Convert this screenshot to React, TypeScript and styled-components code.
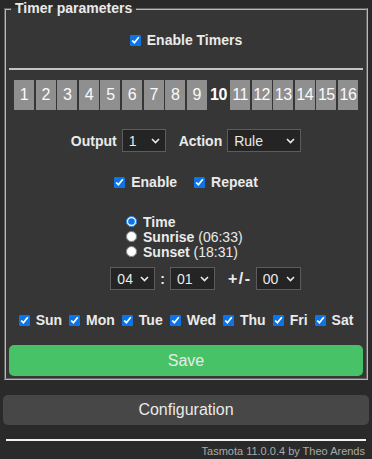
import React from "react";
import styled, { createGlobalStyle } from "styled-components";

const GlobalStyle = createGlobalStyle`
  body {
    margin: 0;
    background: #2a2a2a;
    color: #eaeaea;
    font-family: "Liberation Sans", Arial, sans-serif;
  }
`;

const Page = styled.div`
  padding: 0 3px;
  width: 366px;
`;

const Fieldset = styled.fieldset`
  margin: 0 1px;
  padding: 0 3px 2px;
  border: 2px groove #b8b8b8;
  background: #363636;
  min-width: 0;
`;

const Legend = styled.legend`
  font-weight: bold;
  font-size: 14px;
  line-height: 17px;
  padding: 0 4px;
  margin-left: 2px;
`;

const Row = styled.div<{ $top: number; $height?: number; $gap?: number; $shift?: number }>`
  display: flex;
  justify-content: center;
  align-items: center;
  margin-top: ${(p) => p.$top}px;
  height: ${(p) => p.$height ?? 18}px;
  gap: ${(p) => p.$gap ?? 0}px;
  padding-left: ${(p) => p.$shift ?? 0}px;
`;

const Check = styled.label<{ $gap?: number }>`
  display: inline-flex;
  align-items: center;
  gap: 6px;
  font-weight: bold;
  font-size: 14px;
  margin-right: ${(p) => p.$gap ?? 0}px;

  input {
    width: 11px;
    height: 11px;
    margin: 0;
    accent-color: #0a74e8;
  }
`;

const Rule = styled.hr`
  margin: 19px 0 0;
  border: none;
  height: 2px;
  background: #c4c4c4;
`;

const Tab = styled.div<{ $active?: boolean }>`
  width: 20px;
  height: 30px;
  display: flex;
  align-items: center;
  justify-content: center;
  font-size: 16px;
  color: ${(p) => (p.$active ? "#ffffff" : "#fafafa")};
  font-weight: ${(p) => (p.$active ? "bold" : "normal")};
  background: ${(p) => (p.$active ? "transparent" : "#8f8f8f")};
  letter-spacing: -0.5px;
`;

const Label = styled.span<{ $size?: number }>`
  font-weight: bold;
  font-size: ${(p) => p.$size ?? 14}px;
`;

const SelectWrap = styled.span<{ $w: number }>`
  position: relative;
  display: inline-flex;
  width: ${(p) => p.$w}px;
  height: 23px;

  svg {
    position: absolute;
    right: 6px;
    top: 9px;
    pointer-events: none;
  }
`;

const Select = styled.select`
  appearance: none;
  width: 100%;
  height: 100%;
  box-sizing: border-box;
  background: #242424;
  color: #eaeaea;
  border: 1px solid #5c5c5c;
  border-radius: 0;
  padding: 0 0 0 6px;
  font-family: "Liberation Sans", Arial, sans-serif;
  font-size: 14px;
  outline: none;
`;

const Radios = styled.div`
  margin: 23px auto 0;
  width: 118px;
  padding-right: 2px;
  display: flex;
  flex-direction: column;
`;

const RadioRow = styled.label`
  display: flex;
  align-items: center;
  gap: 6px;
  height: 15px;
  font-size: 14px;

  input {
    width: 11px;
    height: 11px;
    margin: 0;
    accent-color: #0a74e8;
  }

  b {
    font-weight: bold;
  }
`;

const Colon = styled.span`
  font-weight: bold;
  font-size: 14px;
  margin: 0 5px;
`;

const PlusMinus = styled.span`
  font-weight: bold;
  font-size: 16px;
  letter-spacing: 1.5px;
  margin: 0 4px 0 13px;
`;

const Button = styled.button<{ $save?: boolean }>`
  display: block;
  width: 100%;
  border: none;
  border-radius: 5px;
  font-family: "Liberation Sans", Arial, sans-serif;
  font-size: 16px;
  color: #eaeaea;
  background: ${(p) => (p.$save ? "#47c266" : "#474747")};
  height: ${(p) => (p.$save ? 31 : 30)}px;
  margin-top: ${(p) => (p.$save ? 16 : 15)}px;
  padding: 0;
`;

const FooterRule = styled.hr`
  margin: 14px 3px 0;
  border: none;
  height: 2px;
  background: #f2f2f2;
`;

const Footer = styled.div`
  text-align: right;
  font-size: 11px;
  color: #aaaaaa;
  padding: 4px 4px 0 0;
  line-height: 13px;
`;

function Chevron() {
  return (
    <svg width="9" height="6" viewBox="0 0 9 6">
      <path d="M1 1 L4.5 4.5 L8 1" fill="none" stroke="#eaeaea" strokeWidth="1.6" />
    </svg>
  );
}

function Dropdown({ width, value }: { width: number; value: string }) {
  return (
    <SelectWrap $w={width}>
      <Select defaultValue={value}>
        <option>{value}</option>
      </Select>
      <Chevron />
    </SelectWrap>
  );
}

const days = ["Sun", "Mon", "Tue", "Wed", "Thu", "Fri", "Sat"];

export default function App() {
  return (
    <Page>
      <GlobalStyle />
      <Fieldset>
        <Legend>Timer parameters</Legend>
        <Row $top={14}>
          <Check>
            <input type="checkbox" defaultChecked />
            Enable Timers
          </Check>
        </Row>
        <Rule />
        <Row $top={10} $height={30} $gap={1.6}>
          {Array.from({ length: 16 }, (_, i) => (
            <Tab key={i} $active={i === 9}>
              {i + 1}
            </Tab>
          ))}
        </Row>
        <Row $top={19} $height={23}>
          <Label style={{ marginRight: 5 }}>Output</Label>
          <Dropdown width={44} value="1" />
          <Label style={{ margin: "0 5px 0 13px" }}>Action</Label>
          <Dropdown width={74} value="Rule" />
        </Row>
        <Row $top={21}>
          <Check $gap={17}>
            <input type="checkbox" defaultChecked />
            Enable
          </Check>
          <Check>
            <input type="checkbox" defaultChecked />
            Repeat
          </Check>
        </Row>
        <Radios>
          <RadioRow>
            <input type="radio" name="mode" defaultChecked />
            <b>Time</b>
          </RadioRow>
          <RadioRow>
            <input type="radio" name="mode" />
            <span>
              <b>Sunrise</b> (06:33)
            </span>
          </RadioRow>
          <RadioRow>
            <input type="radio" name="mode" />
            <span>
              <b>Sunset</b> (18:31)
            </span>
          </RadioRow>
        </Radios>
        <Row $top={8} $height={23} $shift={39}>
          <Dropdown width={45} value="04" />
          <Colon>:</Colon>
          <Dropdown width={45} value="01" />
          <PlusMinus>+/-</PlusMinus>
          <Dropdown width={45} value="00" />
        </Row>
        <Row $top={21}>
          {days.map((d, i) => (
            <Check key={d} $gap={i < days.length - 1 ? 7 : 0}>
              <input type="checkbox" defaultChecked />
              {d}
            </Check>
          ))}
        </Row>
        <Button $save>Save</Button>
      </Fieldset>
      <Button>Configuration</Button>
      <FooterRule />
      <Footer>Tasmota 11.0.0.4 by Theo Arends</Footer>
    </Page>
  );
}
